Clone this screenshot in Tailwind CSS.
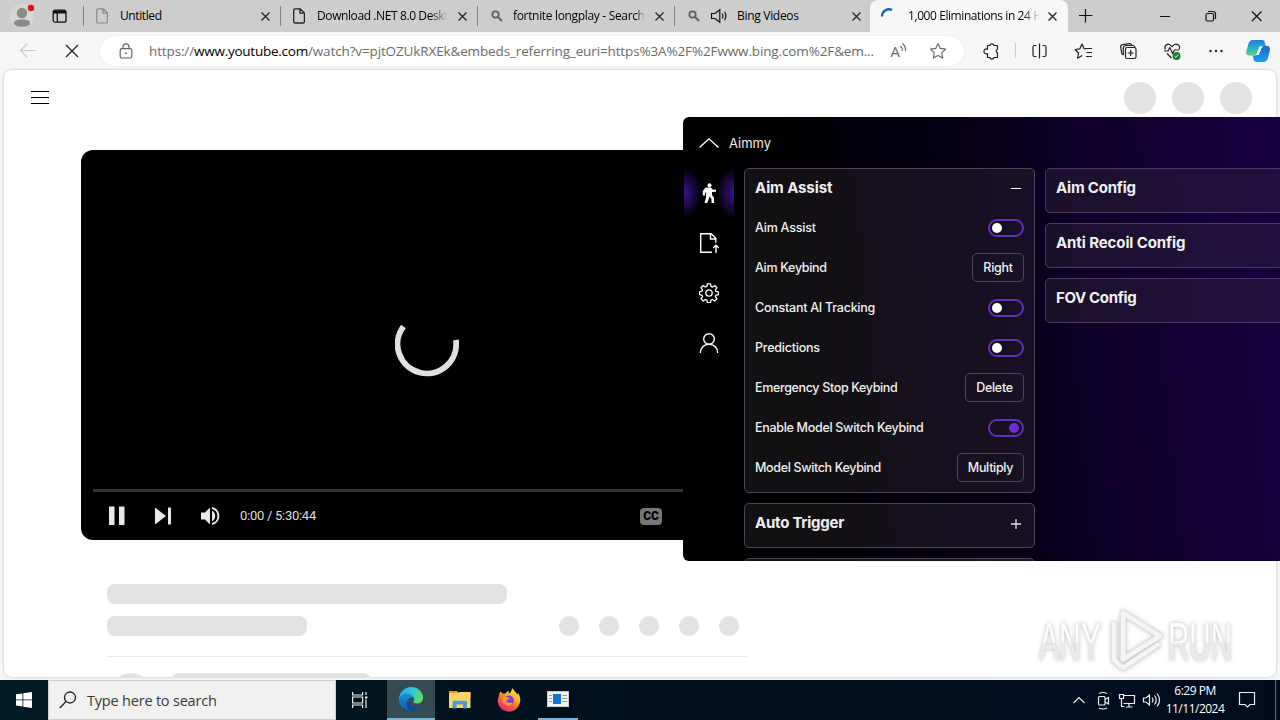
<!DOCTYPE html>
<html lang="en">
<head>
  <meta charset="UTF-8" />
  <meta name="viewport" content="width=device-width, initial-scale=1.0"/>
  <title>1,000 Eliminations in 24 Hours</title>
  <script src="https://cdn.jsdelivr.net/npm/@tailwindcss/browser@4"></script>
</head>
<body class="w-[1280px] h-[720px] overflow-hidden bg-[#f7f7f7] font-['Open_Sans','Noto_Sans',sans-serif] text-black relative flex flex-col">

  <!-- Tab strip -->
  <div class="h-8 shrink-0 bg-[#cdcdcd] flex items-center">
    <div class="w-[83px] h-8 flex items-center shrink-0">
      <svg class="ml-2.5 w-6 h-8 shrink-0" viewBox="0 0 24 32">
        <circle cx="12" cy="16" r="12" fill="#d6d6d6"/>
        <circle cx="12" cy="13" r="5.2" fill="#8c8987"/>
        <path d="M4 23c0-2.500 3-3.500 8-3.500s8 1 8 3.500-3.500 3.800-8 3.800-8-1.300-8-3.800z" fill="#8c8987"/>
        <circle cx="21" cy="8" r="3.200" fill="#e00b1c"/>
      </svg>
      <svg class="ml-[18px] w-4 h-4" viewBox="0 0 16 16" fill="none" stroke="#111" stroke-width="1.300">
        <rect x="1.200" y="2.200" width="12.800" height="12" rx="2"/>
        <path d="M1.200 3.500h12.800M1.200 4.600h12.800" stroke-width="2"/><path d="M5.300 4v10"/>
      </svg>
    </div>

    <div class="w-[197px] h-8 flex items-center shrink-0">
      <span class="w-px h-5 bg-[#808080]"></span>
      <svg class="ml-3 w-3 h-4 shrink-0" viewBox="0 0 12 16" fill="none" stroke="#8a8a8a" stroke-width="1.200"><path d="M2 .8h5.200l4.200 4.200v8.700a1.300 1.300 0 0 1-1.300 1.300H2A1.300 1.300 0 0 1 .7 13.700V2.100A1.300 1.300 0 0 1 2 .8zM7 .8v4.400h4.400"/></svg>
      <span class="ml-3 w-[132px] text-xs tracking-[-0.4px] whitespace-nowrap overflow-hidden">Untitled</span>
      <svg class="ml-[9px] w-[9px] h-[9px] shrink-0" viewBox="0 0 9 9" stroke="#222" stroke-width="1.200"><path d="M.5.500l8 8M8.500.500l-8 8"/></svg>
    </div>
    <div class="w-[197px] h-8 flex items-center shrink-0">
      <span class="w-px h-5 bg-[#808080]"></span>
      <svg class="ml-3 w-3 h-4 shrink-0" viewBox="0 0 12 16" fill="none" stroke="#222" stroke-width="1.300"><path d="M2 .8h5.200l4.200 4.200v8.700a1.300 1.300 0 0 1-1.300 1.300H2A1.300 1.300 0 0 1 .7 13.700V2.100A1.300 1.300 0 0 1 2 .8zM7 .8v4.400h4.400"/></svg>
      <span class="ml-3 w-[132px] text-xs tracking-[-0.4px] whitespace-nowrap overflow-hidden [mask-image:linear-gradient(to_right,#000_86%,transparent_99%)]">Download .NET 8.0 Desktop</span>
      <svg class="ml-[9px] w-[9px] h-[9px] shrink-0" viewBox="0 0 9 9" stroke="#222" stroke-width="1.200"><path d="M.5.500l8 8M8.500.500l-8 8"/></svg>
    </div>
    <div class="w-[197px] h-8 flex items-center shrink-0">
      <span class="w-px h-5 bg-[#808080]"></span>
      <svg class="ml-[13px] w-3 h-3 shrink-0" viewBox="0 0 12 12" fill="none" stroke="#5f5f5f" stroke-width="1.800"><circle cx="4.500" cy="4.500" r="3.200"/><path d="M7 7l4 4"/></svg>
      <span class="ml-2.5 w-[132px] text-xs tracking-[-0.33px] whitespace-nowrap overflow-hidden [mask-image:linear-gradient(to_right,#000_93%,transparent_100%)]">fortnite longplay - Search</span>
      <svg class="ml-2.5 w-[9px] h-[9px] shrink-0" viewBox="0 0 9 9" stroke="#222" stroke-width="1.200"><path d="M.5.500l8 8M8.500.500l-8 8"/></svg>
    </div>
    <div class="w-[196px] h-8 flex items-center shrink-0">
      <span class="w-px h-5 bg-[#808080]"></span>
      <svg class="ml-[13px] w-3 h-3 shrink-0" viewBox="0 0 12 12" fill="none" stroke="#5f5f5f" stroke-width="1.800"><circle cx="4.500" cy="4.500" r="3.200"/><path d="M7 7l4 4"/></svg>
      <svg class="ml-2.5 w-[18px] h-4 shrink-0" viewBox="0 0 18 16" fill="none" stroke="#111" stroke-width="1.200"><path d="M1.500 5.500v5h3.500l4.800 3.800V1.700L5 5.500z"/><path d="M12.300 5.500q1.500 2.500 0 5M14.600 3.800q2.600 4.200 0 8.400"/></svg>
      <span class="ml-[9px] w-[105px] text-xs tracking-[-0.3px] whitespace-nowrap">Bing Videos</span>
      <svg class="ml-2.5 w-[9px] h-[9px] shrink-0" viewBox="0 0 9 9" stroke="#222" stroke-width="1.200"><path d="M.5.500l8 8M8.500.500l-8 8"/></svg>
    </div>
    <div class="w-[198px] h-8 flex items-center shrink-0 bg-[#f7f7f7] rounded-t-lg">
      <svg class="ml-2.5 w-4 h-4 shrink-0" viewBox="0 0 16 16" fill="none" stroke="#1566b7" stroke-width="2.400"><path d="M2 8.500A7 7 0 0 1 12 2"/></svg>
      <span class="ml-3 w-[132px] text-xs tracking-[-0.42px] whitespace-nowrap overflow-hidden [mask-image:linear-gradient(to_right,#000_87%,transparent_100%)]">1,000 Eliminations in 24 Hours</span>
      <svg class="ml-2 w-[9px] h-[9px] shrink-0" viewBox="0 0 9 9" stroke="#222" stroke-width="1.200"><path d="M.5.500l8 8M8.500.500l-8 8"/></svg>
    </div>
    <svg class="w-[212px] h-8 shrink-0" viewBox="1068 0 212 32" fill="none" stroke="#111" stroke-width="1.200">
      <path d="M1079 15.500h13.500M1085.500 9v13.500M1160 16.500h10M1252 11.500l9.500 9.500M1261.500 11.500l-9.500 9.500"/>
      <rect x="1206" y="13.500" width="7.500" height="7.500" rx="1.500"/><path d="M1208 11.500h5a2.500 2.500 0 0 1 2.500 2.500v5"/>
    </svg>
  </div>

  <!-- Toolbar -->
  <div class="h-[38px] shrink-0 flex items-center">
    <svg class="w-[100px] h-[38px] shrink-0" viewBox="0 32 100 38" fill="none">
      <path d="M20.500 50.500H36M27 44l-6.500 6.500L27 57" stroke="#c9c9c9" stroke-width="1.200"/>
      <path d="M66 45l12 12M78 45L66 57" stroke="#222" stroke-width="1.300"/>
    </svg>
    <div class="w-[864px] h-[30px] bg-white rounded-full flex items-center shrink-0 shadow-[0_0_2px_#e2e2e2]">
      <svg class="ml-[19px] w-3.5 h-4 shrink-0" viewBox="0 0 14 16" fill="none" stroke="#666" stroke-width="1.200"><rect x="1.200" y="5.600" width="11.600" height="9.400" rx="1.800"/><path d="M4 5.600V3.800a3 3 0 0 1 6 0v1.800"/><circle cx="7" cy="10.200" r=".7" fill="#666" stroke-width=".6"/></svg>
      <div class="ml-4 w-[732px] text-[13.5px] tracking-[-0.13px] whitespace-nowrap text-[#6b6b6b]">https://<span class="text-black tracking-[-0.25px]">www.youtube.com</span>/watch?v=pjtOZUkRXEk&amp;embeds_referring_euri=https%3A%2F%2Fwww.bing.com%2F&amp;em...</div>
      <svg class="ml-[9px] w-[58px] h-6" viewBox="890 39 58 24" fill="none" stroke="#666" stroke-width="1.100">
        <text x="890.500" y="57" font-size="15" font-family="Open Sans" fill="#666" stroke="none">A</text>
        <path d="M900.500 46q2.200 2 1.800 5M902.500 43.500q3.500 3 3 7.500"/>
        <path d="M938 43.500l2.300 4.900 5.300.7-3.900 3.700 1 5.300-4.700-2.600-4.700 2.600 1-5.300-3.900-3.700 5.300-.7z" stroke-linejoin="round"/>
      </svg>
    </div>
    <svg class="w-[316px] h-[38px] shrink-0" viewBox="964 32 316 38" fill="none" stroke="#202020" stroke-width="1.200" stroke-linejoin="round">
      <path d="M987.500 45.500h2.300a2.200 2.200 0 0 1 4.200 0h3.500v3.800a1.900 1.900 0 0 0 0 3.600v4.600h-3.500a2.200 2.200 0 0 1-4.200 0h-2.300v-4a2.400 2.400 0 1 1 0-4.200z"/>
      <path d="M1015.500 43v15" stroke="#cfcfcf"/>
      <path d="M1036.500 45.500h-2a1.500 1.500 0 0 0-1.500 1.500v8a1.500 1.500 0 0 0 1.500 1.500h2M1042.500 45.500h2a1.500 1.500 0 0 1 1.500 1.500v8a1.500 1.500 0 0 1-1.500 1.500h-2M1039.500 43.500v15"/>
      <path d="M1086 49l-2-.4-2-4.600-2.300 4.900-4.700.6 3.600 3.500-1 5.200 4.600-2.600M1085.500 48.500h6.500M1086.500 52.500h5.500M1086 56.500h6"/>
      <rect x="1125.500" y="47.500" width="10.500" height="11" rx="1.800"/><path d="M1130.700 50v6M1127.700 53h6M1123.300 55a2.500 2.500 0 0 1-1.600-2l-1-5.700a2.300 2.300 0 0 1 1.900-2.600l6.700-1.100a2.300 2.300 0 0 1 2.500 1.600M1123.300 55v-6.500a3 3 0 0 1 3-3h7a1.800 1.800 0 0 1 1.600 1.800"/>
      <path d="M1165.300 49.500c-1.600-4 2.400-7.200 5.900-3.700l.8.900.9-.9c3.500-3.500 8-.3 6.200 3.700M1164 51h4l1.800-3.500 2.700 6 2-3.500h4.500M1167 53.500l4.500 4.500"/>
      <circle cx="1176.500" cy="56" r="4" fill="#128025" stroke="none"/><path d="M1174.600 56.200l1.300 1.200 2.500-2.800" stroke="#fff" stroke-width="1"/>
      <g fill="#202020" stroke="none"><circle cx="1210.500" cy="51" r="1.200"/><circle cx="1216" cy="51" r="1.200"/><circle cx="1221.500" cy="51" r="1.200"/></g>
      <defs>
        <linearGradient id="cp1" x1="0" y1="0" x2="0" y2="1"><stop offset="0" stop-color="#1c7fe0"/><stop offset=".5" stop-color="#25b0c4"/><stop offset="1" stop-color="#52d48a"/></linearGradient>
        <linearGradient id="cp2" x1="0" y1="0" x2="0" y2="1"><stop offset="0" stop-color="#1f66d0"/><stop offset="1" stop-color="#16a3f5"/></linearGradient>
      </defs>
      <path d="M1253 40h9c2 0 2.500 1 3 3l.8 3h-3c-2 0-3 1-3.600 3l-1.500 4c-.5 1.800-1.500 2.500-3 2.500h-5c-3 0-4-2-3.200-5l2-7c.7-2.300 1.800-3.500 4.500-3.500z" fill="url(#cp1)" stroke="none"/>
      <path d="M1263 62h-6.500c-2 0-2.500-1-3-3l-.8-3.500h2.300c2 0 3-1 3.600-3l1.500-4c.5-1.800 1.500-2.500 3-2.500h3.500c3 0 4 2 3.200 5l-2 7.500c-.7 2.300-2 3.500-4.800 3.500z" fill="url(#cp2)" stroke="none"/>
      <path d="M1259.500 46.500h4l-2 1.500-2.800 7h-3.500l1.800-2z" fill="#fff" stroke="none"/>
    </svg>
  </div>

  <!-- Web page -->
  <div class="h-[607px] shrink-0 mx-1 bg-white rounded-lg shadow-[0_0_2px_1px_#dadada] overflow-hidden">
    <header class="h-14 pl-[27px] pr-6 flex items-center justify-between">
      <div class="w-[18px] h-[13px] mb-px flex flex-col justify-between">
        <span class="h-px bg-black"></span><span class="h-px bg-black"></span><span class="h-px bg-black"></span>
      </div>
      <div class="flex gap-4">
        <span class="size-8 rounded-full bg-[#e3e3e3]"></span>
        <span class="size-8 rounded-full bg-[#e3e3e3]"></span>
        <span class="size-8 rounded-full bg-[#e3e3e3]"></span>
      </div>
    </header>

    <!-- Player -->
    <div class="mt-6 ml-[77px] w-[692px] h-[390px] bg-black rounded-xl flex flex-col">
      <div class="h-[339px] flex items-center justify-center">
        <svg class="mt-[55px] w-16 h-16" viewBox="0 0 64 64" fill="none" stroke="#e0e0e0" stroke-width="5.800"><path d="M8.500 11.500A29.300 29.300 0 1 0 60.900 25"/></svg>
      </div>
      <div class="mx-3 h-[3px] bg-[#333]"></div>
      <div class="h-12 pl-6 flex items-center">
        <svg class="w-[120px] h-6" viewBox="105 504 120 24" fill="#e8e8e8">
          <path d="M109 506.500h5.500v18.500H109zM119 506.500h5.500v18.500H119zM155 507.500l11 8.500-11 8.500zM168 507.500h3v17h-3zM201 512.500v7h4l5 5v-17l-5 5zM212 510.500v11c2-1 3.200-3 3.200-5.500s-1.200-4.500-3.200-5.500z"/>
          <path d="M212 508a8.200 8.200 0 0 1 0 16" fill="none" stroke="#e8e8e8" stroke-width="2"/>
        </svg>
        <span class="ml-[15px] w-[400px] -mt-px font-['Roboto',sans-serif] text-[13px] tracking-[-0.27px] text-[#ddd]">0:00 / 5:30:44</span>
        <span class="w-[22px] h-[17px] rounded-sm bg-[#777] text-black text-[12px] leading-[17px] font-black text-center font-['Roboto',sans-serif]">CC</span>
      </div>
    </div>

    <!-- Placeholder metadata -->
    <div class="mt-11 ml-[103px] w-[640px]">
      <div class="w-[400px] h-5 rounded-lg bg-[#e3e3e3]"></div>
      <div class="mt-3 pb-5 flex justify-between pr-2 border-b border-[#e8e8e8]">
        <div class="w-[200px] h-5 rounded-lg bg-[#e3e3e3]"></div>
        <div class="flex gap-5">
          <span class="size-5 rounded-full bg-[#e3e3e3]"></span>
          <span class="size-5 rounded-full bg-[#e3e3e3]"></span>
          <span class="size-5 rounded-full bg-[#e3e3e3]"></span>
          <span class="size-5 rounded-full bg-[#e3e3e3]"></span>
          <span class="size-5 rounded-full bg-[#e3e3e3]"></span>
        </div>
      </div>
      <div class="mt-4 ml-1 flex gap-8">
        <span class="size-10 rounded-full bg-[#e3e3e3]"></span>
        <span class="-ml-3 w-[200px] h-5 rounded-lg bg-[#e3e3e3]"></span>
      </div>
    </div>
  </div>

  <!-- Taskbar -->
  <div class="mt-[3px] h-10 shrink-0 flex items-center bg-gradient-to-r from-[#001a24] via-[#000f1c] to-[#000b20]">
    <div class="w-12 flex justify-center">
      <svg class="w-4 h-4" viewBox="0 0 16 16" fill="#fff"><path d="M0 2.300l6.500-.9v6.100H0zM7.300 1.300L16 0v7.500H7.300zM0 8.300h6.500v6.200L0 13.600zM7.300 8.300H16v7.700l-8.700-1.300z"/></svg>
    </div>
    <div class="w-72 h-10 bg-[#f1f1f1] border border-[#cfcfcf] flex items-center">
      <svg class="ml-2.5 w-[18px] h-[18px]" viewBox="0 0 18 18" fill="none" stroke="#222" stroke-width="1.300"><circle cx="11" cy="6.500" r="5.500"/><path d="M7 10.500L.8 17"/></svg>
      <span class="ml-2.5 mt-0.5 text-[14.500px] tracking-[-0.2px] text-[#3a3a3a]">Type here to search</span>
    </div>
    <div class="w-[51px] flex justify-center">
      <svg class="-ml-[3px] w-4 h-4" viewBox="0 0 16 16" fill="none" stroke="#eee" stroke-width="1.200"><path d="M.6 0v3h10V0M.6 16v-3h10v3M.6 5h10v6H.6zM14 0v3M14 7.500V16"/><path d="M13 4.500h2.500v2H13z" fill="#eee" stroke="none"/></svg>
    </div>
    <div class="w-12 h-10 bg-[#364a52] border-b-2 border-[#76b4e6] flex items-center justify-center">
      <svg class="w-6 h-6" viewBox="0 0 24 24">
        <defs>
          <linearGradient id="edgeTop" x1="0" y1=".4" x2="1" y2=".6"><stop offset="0" stop-color="#2aa9e6"/><stop offset=".5" stop-color="#32c7d3"/><stop offset="1" stop-color="#65dc55"/></linearGradient>
          <linearGradient id="edgeLow" x1="0" y1="0" x2="0" y2="1"><stop offset="0" stop-color="#1791dc"/><stop offset="1" stop-color="#1059b0"/></linearGradient>
        </defs>
        <path d="M0 12C.3 5 5.500 0 12 0c7 0 12 5 12 10.500 0 4-2.800 6-6 6-2.600 0-4.200-1-3.500-2.300.9-1.300 1-2.300 0-3.900C12 6.500 4 6.500 0 12z" fill="url(#edgeTop)"/>
        <path d="M0 12c1.500-4 5-5.700 8.500-5.500 3.300.2 6 2.500 6.200 4.500-4.500-1.500-7 2-5.500 5.200 2 4.300 8.500 5.300 12.800 2.300C19.500 22 16 24 12 24 5 24 0 19 0 12z" fill="url(#edgeLow)"/>
        <path d="M9.300 12.500c-3 3.500-2 9 2.700 11.500 4 0 8-2.300 10-5.500-5 3-11 1.500-12.700-2.300-.5-1.200-.5-2.500 0-3.700z" fill="#0b4a94"/>
      </svg>
    </div>
    <div class="w-[49px] flex justify-center">
      <svg class="w-[22px] h-5" viewBox="0 0 22 20"><path d="M0 2.500V1h8l2 2h11.500v4H0z" fill="#e0a02a"/><path d="M0 3h9l2-1h10.500v16H0z" fill="#fbd466"/><path d="M3.500 18.500v-6.300a1.500 1.500 0 0 1 1.500-1.500h11.500a1.500 1.500 0 0 1 1.500 1.500v6.300h-4V14.500H7.500v4z" fill="#479bd0"/></svg>
    </div>
    <div class="w-12 pl-px flex justify-center">
      <svg class="w-6 h-6" viewBox="0 0 24 24">
        <defs><linearGradient id="fox" x1=".8" y1="0" x2=".2" y2="1"><stop offset="0" stop-color="#fff04a"/><stop offset=".35" stop-color="#ffb02e"/><stop offset=".65" stop-color="#ff5a36"/><stop offset="1" stop-color="#e31587"/></linearGradient></defs>
        <path d="M3.500 3.500l2.300 2.300c1-.4 1.900-.4 2.800-.2C9.500 3.800 11 3 12 3c-.4 1-.3 1.700.3 2.500L14 3.800c.3-1.500.9-2.700 1.700-3.600 1 3 4 4.300 4.500 6.300.5-.4.700-1 .7-1.800 1.700 2.500 2.600 5.300 2.300 8.300-.7 6-5.200 10.700-11.200 10.700S.8 19 .8 13c0-2 .4-3.500 1.200-5 0-1.800.5-3.300 1.500-4.500z" fill="url(#fox)"/>
        <circle cx="12" cy="12.500" r="5" fill="#7a43d8"/>
        <path d="M5.500 9c2-.8 3.500.2 5 .5 1 .2 1.800.3 1.800.8 0 1.200-2.800 1-3 3 1 2.500 5 1.500 6.500 1.500-1.500 3.500-6 4-8.500 1.500C5.500 14.500 5 11.500 5.500 9z" fill="#ff9a2e"/>
      </svg>
    </div>
    <div class="ml-[6px] w-10 h-10 border-b-2 border-[#76b4e6] flex items-center justify-center">
      <svg class="w-[22px] h-4" viewBox="0 0 22 16"><rect x=".5" y=".5" width="21" height="15" fill="#f3f3f3" stroke="#ccc"/><rect x="6" y="3" width="8" height="10" fill="#0f78d4"/><path d="M2 4.500h3M2 7.500h3M2 10.500h3M15.500 4.500h4.500M15.500 7.500h4.500M15.500 10.500h4.500" stroke="#8b98a5"/></svg>
    </div>
    <div class="ml-auto w-[212px] h-10 flex items-center">
      <svg class="w-24 h-10 shrink-0" viewBox="1068 680 96 40" fill="none" stroke="#eee" stroke-width="1.200">
        <path d="M1073.500 703l5.500-5.500 5.500 5.500"/>
        <rect x="1098.500" y="696.500" width="6.500" height="8.500" rx="1"/><path d="M1105 699.500l3.500-2v6.500l-3.500-2M1099 693.500q4-2 8 0M1099 708q4 2 8 0"/>
        <path d="M1123.500 695.500h11v8h-11M1129 704v3M1126 707h6.500M1119.500 694.500h4v4h-4zM1121.500 698.500v8h3"/>
        <path d="M1143.500 698v4h2.500l3.500 3v-10l-3.500 3zM1152 697.500q2 2.500 0 5M1154.500 695.500q3.500 4.500 0 9M1157 693.500q5 6.500 0 13"/>
      </svg>
      <div class="w-[62px] text-center text-white text-xs leading-[18px] tracking-[-0.5px] whitespace-nowrap">6:29 PM<br>11/11/2024</div>
      <svg class="w-[54px] h-10 shrink-0" viewBox="1226 680 54 40" fill="none" stroke="#eee" stroke-width="1.200"><path d="M1239.500 692.500h15v12h-4.500l-2.500 2.500-2.500-2.500h-5.500z"/><path d="M1275.500 680v40" stroke="#5b6470"/></svg>
    </div>
  </div>

  <!-- Watermark -->
  <svg class="absolute left-[1030px] top-[602px] w-[210px] h-[72px] drop-shadow-[0_0_2px_#aaa] opacity-75" viewBox="0 0 210 72">
    <defs><linearGradient id="wm" x1="0" y1="0" x2="0" y2="1"><stop offset=".5" stop-color="#fff"/><stop offset=".55" stop-color="#e4e4e4"/></linearGradient></defs>
    <g fill="url(#wm)" stroke="#e2e2e2" stroke-width=".5" font-family="Liberation Sans Narrow, Liberation Sans" font-size="54">
      <text x="9" y="58" textLength="62" lengthAdjust="spacingAndGlyphs">ANY</text>
      <text x="138" y="58" textLength="64" lengthAdjust="spacingAndGlyphs">RUN</text>
    </g>
    <g fill="none" stroke="#d2d2d2" stroke-width="6" stroke-linejoin="round"><path d="M93 11l37 23-37 23zM84 20v38l9 8 36-24"/></g>
    <g fill="none" stroke="#f2f2f2" stroke-width="4.500" stroke-linejoin="round"><path d="M93 11l37 23-37 23zM84 20v38l9 8 36-24"/></g>
  </svg>

  <!-- Aimmy window, runs off the right edge of the screen -->
  <div class="absolute left-[683px] top-[117px] w-[597px] h-[444px] rounded-l-md overflow-hidden bg-[linear-gradient(84deg,#000_20%,#060015_50%,#0d0026_66%,#160040_100%)] text-[#f0f0f0] font-['Inter','Noto_Sans',sans-serif]">
    <div class="h-[51px] pl-4 flex items-center">
      <svg class="w-5 h-2.5" viewBox="0 0 20 10" fill="none" stroke="#fff" stroke-width="1.300"><path d="M.5 9.500L10 .8l9.500 8.700"/></svg>
      <span class="ml-2.5 mt-0.5 text-[13px]">Aimmy</span>
    </div>
    <div class="flex">
      <nav class="w-[61px] shrink-0 flex flex-col">
        <div class="ml-px w-[50px] h-[50px] flex items-center justify-center bg-[radial-gradient(ellipse_18px_26px_at_left,#3a1290,transparent),radial-gradient(ellipse_18px_26px_at_right,#3a1290,transparent)]">
          <svg class="w-5 h-5" viewBox="0 0 20 20" fill="#fff"><circle cx="10.500" cy="2.300" r="2"/><path d="M6.500 4.500h5.500l2 2.300 3-.2v2.200l-4 .2v3l2 2.700v5.300h-2.500v-4l-2-2.500-.7 2.500-1.600 4H5.500l1.500-5.500V9.300L6 10v2.500H3.800V8z"/></svg>
        </div>
        <div class="ml-px w-[50px] h-[50px] flex items-center justify-center">
          <svg class="w-5 h-5" viewBox="0 0 20 20" fill="none" stroke="#fff" stroke-width="1.400"><path d="M13 19.300H1.700V.7h10.500l4.600 4.500v4.500M11.500.8V6h5.300M17 20v-7.500M14.200 15l2.800-2.800 2.800 2.800"/></svg>
        </div>
        <div class="ml-px w-[50px] h-[50px] flex items-center justify-center">
          <svg class="w-5 h-5" viewBox="0 0 20 20" fill="none" stroke="#fff" stroke-width="1.300" stroke-linejoin="round"><circle cx="10" cy="10" r="3.200"/><path d="M8.400.8h3.200l.4 2.500 1.500.7 2.200-1.500 2.200 2.200-1.500 2.200.6 1.500 2.400.4v2.800l-2.400.5-.6 1.500 1.500 2.200-2.200 2.200-2.200-1.500-1.500.6-.5 2.500H8.400l-.5-2.500-1.500-.6-2.200 1.500L2 15.800l1.500-2.200-.7-1.500-2.300-.5V8.800l2.300-.4.700-1.500L2 4.700l2.200-2.200L6.400 4l1.500-.7z"/></svg>
        </div>
        <div class="ml-px w-[50px] h-[50px] flex items-center justify-center">
          <svg class="w-5 h-5" viewBox="0 0 20 20" fill="none" stroke="#fff" stroke-width="1.400"><circle cx="10" cy="6" r="5.300"/><path d="M1.300 20c0-5.300 3.500-8.700 8.700-8.700s8.700 3.400 8.700 8.700"/></svg>
        </div>
      </nav>

      <div class="w-[291px] shrink-0 flex flex-col gap-2.5 text-[12.5px] tracking-[-0.3px] font-medium">
        <section class="h-[325px] px-2.5 border border-[#4a4455] rounded-[5px] bg-[#40363f]/30">
          <div class="h-[39px] flex items-center justify-between">
            <h2 class="text-[15px] font-bold tracking-[-0.1px]">Aim Assist</h2>
            <span class="w-2.5 h-px mr-[3px] bg-white"></span>
          </div>
          <div class="h-10 flex items-center justify-between"><span class="tracking-[-0.22px]">Aim Assist</span>
            <span class="w-9 h-[18px] px-0.5 border-2 border-[#6132b6] rounded-full flex items-center"><span class="size-2.5 rounded-full bg-white"></span></span>
          </div>
          <div class="h-10 flex items-center justify-between">Aim Keybind
            <span class="w-[52px] h-[29px] mb-0.5 pt-0.5 border border-[#4d4559] rounded-[5px] flex items-center justify-center">Right</span>
          </div>
          <div class="h-10 flex items-center justify-between"><span class="tracking-[-0.25px]">Constant AI Tracking</span>
            <span class="w-9 h-[18px] px-0.5 border-2 border-[#6132b6] rounded-full flex items-center"><span class="size-2.5 rounded-full bg-white"></span></span>
          </div>
          <div class="h-10 flex items-center justify-between"><span class="tracking-[-0.22px]">Predictions</span>
            <span class="w-9 h-[18px] px-0.5 border-2 border-[#6132b6] rounded-full flex items-center"><span class="size-2.5 rounded-full bg-white"></span></span>
          </div>
          <div class="h-10 flex items-center justify-between"><span class="tracking-[-0.35px]">Emergency Stop Keybind</span>
            <span class="w-[59px] h-[29px] mb-0.5 pt-0.5 border border-[#4d4559] rounded-[5px] flex items-center justify-center">Delete</span>
          </div>
          <div class="h-10 flex items-center justify-between">Enable Model Switch Keybind
            <span class="w-9 h-[18px] px-[3px] border-2 border-[#6132b6] rounded-full flex items-center justify-end"><span class="size-2.5 rounded-full bg-[#722ed1]"></span></span>
          </div>
          <div class="h-10 flex items-center justify-between"><span class="tracking-[-0.35px]">Model Switch Keybind</span>
            <span class="w-[67px] h-[29px] mb-0.5 pt-0.5 border border-[#4d4559] rounded-[5px] flex items-center justify-center">Multiply</span>
          </div>
        </section>
        <section class="h-[45px] px-2.5 border border-[#4a4455] rounded-[5px] bg-[#40363f]/30">
          <div class="h-[39px] flex items-center justify-between">
            <h2 class="text-[15px] font-bold tracking-[-0.25px]">Auto Trigger</h2>
            <svg class="mr-[3px] mt-px w-2.5 h-2.5" viewBox="0 0 10 10" stroke="#ddd" stroke-width="1.300"><path d="M5 0v10M0 5h10"/></svg>
          </div>
        </section>
        <section class="h-[45px] border border-[#4a4455] rounded-[5px] bg-[#40363f]/30"></section>
      </div>

      <div class="ml-2.5 w-[291px] shrink-0 flex flex-col gap-2.5">
        <section class="h-[45px] px-2.5 border border-[#4a3a60] rounded-[5px] bg-[#40363f]/30"><h2 class="leading-[38px] text-[15px] font-bold tracking-[-0.2px]">Aim Config</h2></section>
        <section class="h-[45px] px-2.5 border border-[#4a3a60] rounded-[5px] bg-[#40363f]/30"><h2 class="leading-[38px] text-[15px] font-bold tracking-[-0.1px]">Anti Recoil Config</h2></section>
        <section class="h-[45px] px-2.5 border border-[#4a3a60] rounded-[5px] bg-[#40363f]/30"><h2 class="leading-[38px] text-[15px] font-bold tracking-[-0.35px]">FOV Config</h2></section>
      </div>
    </div>
  </div>
</body>
</html>
